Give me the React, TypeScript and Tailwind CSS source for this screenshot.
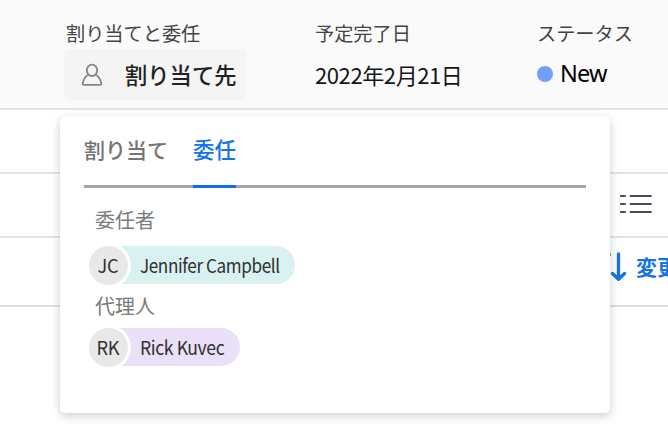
import type { ReactNode } from 'react';

function Field({ label, className, children }: { label: string; className: string; children: ReactNode }) {
  return (
    <div className={`shrink-0 ${className}`}>
      <div className="-mt-px h-7 whitespace-nowrap text-[19.2px] leading-7 text-[#444]">{label}</div>
      {children}
    </div>
  );
}

function PersonIcon() {
  return (
    <svg className="h-6 w-[22px] shrink-0" viewBox="0 0 22 24" fill="none" stroke="#858585" strokeWidth="1.8" strokeLinejoin="round">
      <ellipse cx="11" cy="7.300" rx="5.200" ry="5.700" />
      <path d="M7.300 11.800c-2.800 1.300-4.300 4-5.500 7.800-.5 1.600 0 2.300 1.300 2.300h15.800c1.300 0 1.800-.7 1.300-2.300-1.200-3.800-2.700-6.500-5.500-7.800" />
    </svg>
  );
}

function Chip({ initials, name, className, nameClass }: { initials: string; name: string; className: string; nameClass: string }) {
  return (
    <div className="flex h-[39px] items-center">
      <div className="z-10 flex h-[39px] w-[38.5px] shrink-0 items-center justify-center rounded-full bg-[#e8e8e8] pb-0.5 text-[19px] leading-none tracking-[-0.3px] text-[#303030] ring-[3px] ring-white">
        <span className="scale-x-[0.96]">{initials}</span>
      </div>
      <div className={`-ml-[19.5px] mb-px flex h-[38px] items-center whitespace-nowrap rounded-r-full pb-0.5 pl-8 leading-none text-[#303030] ${className}`}>
        <span className={`origin-left text-[19px] tracking-[-0.42px] ${nameClass}`}>{name}</span>
      </div>
    </div>
  );
}

export default function App() {
  return (
    <div className="relative h-[427px] w-[668px] overflow-hidden bg-white font-['Noto_Sans_CJK_JP',sans-serif]">
      <header className="flex h-[110px] border-b-2 border-[#e4e4e4] bg-[#fafafa] pt-5">
        <Field label="割り当てと委任" className="ml-[66px] w-[249px]">
          <button className="-ml-0.5 mt-0.5 flex h-[51px] w-[182px] items-center rounded-md bg-[#f4f4f4] pl-[17px] text-[22.300px] font-medium text-[#222]">
            <PersonIcon />
            <span className="ml-[22px] whitespace-nowrap">割り当て先</span>
          </button>
        </Field>
        <Field label="予定完了日" className="w-[222px]">
          <div className="mt-0.5 flex h-[51px] items-center whitespace-nowrap text-[22px] tracking-[-0.4px] text-[#161616]">2022年2月21日</div>
        </Field>
        <Field label="ステータス" className="w-[131px]">
          <div className="mt-px flex h-[51px] items-center">
            <span className="size-4 rounded-full bg-[#71a0fc]" />
            <span className="ml-[7px] font-['Noto_Sans',sans-serif] text-[23.500px] tracking-[-0.8px] text-black">New</span>
          </div>
        </Field>
      </header>
      <div className="h-16 border-b-2 border-[#e1e3e5]" />
      <div className="flex h-16 items-center justify-end border-b-2 border-[#e1e3e5] pb-[3px] pr-4">
        <svg className="h-5 w-8" viewBox="0 0 32 20" stroke="#454a54" strokeWidth="1.800" strokeLinecap="round">
          <path d="M.8 2H5M.8 10H5M.8 18H5M10.500 2h20.500M10.500 10h20.500M10.500 18h20.500" />
        </svg>
      </div>
      <div className="flex h-[69px] items-center border-b-2 border-[#dddfe1] pb-2.5 pl-[603px]">
        <svg className="h-[30px] w-6 shrink-0" viewBox="0 0 24 30" fill="none" stroke="#1473e6" strokeWidth="3.300" strokeLinecap="round" strokeLinejoin="round">
          <path d="M15.500 2v25M9.500 21.500l6 5.800 6-5.800" />
          <path d="M7 1v3" stroke="#777" strokeWidth="1.500" strokeLinecap="butt" />
        </svg>
        <span className="ml-[9px] whitespace-nowrap text-[21px] font-bold text-[#1473e6]">変更</span>
      </div>

      <section className="absolute left-[60px] top-[116px] h-[297px] w-[550px] rounded-[5px] bg-white px-6 shadow-[0_3px_10px_rgba(55,85,105,0.28)]">
        <div className="flex h-[72px] gap-[25px] border-b-[3px] border-[#a4a4a4] text-[21px] font-medium leading-[66px]">
          <div className="whitespace-nowrap text-[#747474]">割り当て</div>
          <div className="h-[72px] w-[43px] whitespace-nowrap border-b-[3px] border-[#0d6bf0] text-[21.500px] text-[#1473e6]">委任</div>
        </div>
        <div className="pl-[5px] pt-[17px]">
          <div className="h-[30px] pl-[6px] text-[20px] leading-[30px] text-[#7b7b7b]">委任者</div>
          <div className="h-[56px] pt-[11px]">
            <Chip initials="JC" name="Jennifer Campbell" className="w-[187px] bg-[#d9f2f1]" nameClass="scale-x-[0.9]" />
          </div>
          <div className="h-[30px] pl-[6px] text-[20px] leading-[30px] text-[#7b7b7b]">代理人</div>
          <div className="pt-[7px]">
            <Chip initials="RK" name="Rick Kuvec" className="w-[132px] bg-[#eae0f8]" nameClass="scale-x-[0.925]" />
          </div>
        </div>
      </section>
    </div>
  );
}
